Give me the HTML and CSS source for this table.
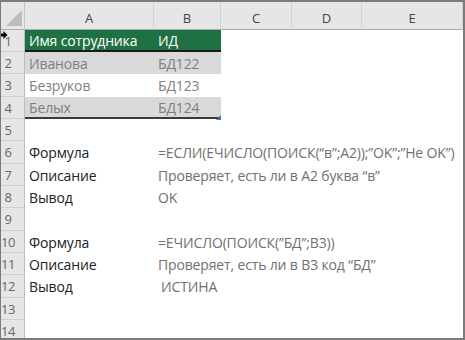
FILE: index.html
```html
<!DOCTYPE html>
<html>
<head>
<meta charset="utf-8">
<link rel="stylesheet" href="styles.css">
</head>
<body>
<div class="frame">
  <div class="sheet">
    <div class="corner"><svg width="16" height="16" viewBox="0 0 16 16"><polygon points="16,0 16,16 0,16" fill="#bdbdbd"/></svg></div>
    <div class="ch">A</div>
    <div class="ch">B</div>
    <div class="ch">C</div>
    <div class="ch">D</div>
    <div class="ch last">E</div>

    <div class="rh">1</div>
    <div class="c head">Имя сотрудника</div>
    <div class="c head">ИД</div>
    <div class="c rest"></div>

    <div class="rh">2</div>
    <div class="c band">Иванова</div>
    <div class="c band">БД122</div>
    <div class="c rest"></div>

    <div class="rh">3</div>
    <div class="c plain">Безруков</div>
    <div class="c plain">БД123</div>
    <div class="c rest"></div>

    <div class="rh">4</div>
    <div class="c band end">Белых</div>
    <div class="c band end">БД124</div>
    <div class="c rest"></div>

    <div class="rh">5</div>
    <div class="c full"></div>

    <div class="rh">6</div>
    <div class="c label">Формула</div>
    <div class="c value">=ЕСЛИ(ЕЧИСЛО(ПОИСК(“в”;A2));”OK”;”Не OK”)</div>

    <div class="rh">7</div>
    <div class="c label">Описание</div>
    <div class="c value">Проверяет, есть ли в A2 буква “в”</div>

    <div class="rh">8</div>
    <div class="c label">Вывод</div>
    <div class="c value">OK</div>

    <div class="rh">9</div>
    <div class="c full"></div>

    <div class="rh">10</div>
    <div class="c label">Формула</div>
    <div class="c value">=ЕЧИСЛО(ПОИСК(”БД”;B3))</div>

    <div class="rh">11</div>
    <div class="c label">Описание</div>
    <div class="c value">Проверяет, есть ли в B3 код “БД”</div>

    <div class="rh">12</div>
    <div class="c label">Вывод</div>
    <div class="c value indent">ИСТИНА</div>

    <div class="rh">13</div>
    <div class="c full"></div>

    <div class="rh">14</div>
    <div class="c full"></div>
  </div>
  <svg class="cursor" width="8" height="8" viewBox="0 0 8 8"><polygon points="0,2.5 3.5,2.5 3.5,0 7.5,4 3.5,8 3.5,5.5 0,5.5" fill="#000"/></svg>
  <svg class="handle" width="5" height="5" viewBox="0 0 5 5"><polygon points="5,0 5,5 0,5" fill="#3d6fc6"/></svg>
</div>
</body>
</html>
```
FILE: styles.css
```css
html, body {
  margin: 0;
  padding: 0;
  background: #fff;
}

.frame {
  position: relative;
  width: 462px;
  height: 336px;
  border-top: 2px solid #7b7b7b;
  border-left: 1px solid #7b7b7b;
  border-right: 2px solid #7b7b7b;
  border-bottom: 2px solid #7b7b7b;
  overflow: hidden;
  font-family: "Open Sans", "Noto Sans", sans-serif;
}

.sheet {
  display: grid;
  grid-template-columns: 24px 129px 67px 71px 70px 101px;
  grid-template-rows: 28px 22px 22px 23px 22px 22px 23px 22px 22px 23px 22px 22px 23px 22px 22px;
  height: 336px;
  overflow: hidden;
}

.corner {
  background: #e6e6e6;
  border-right: 1px solid #c6c6c6;
  border-bottom: 1px solid #ababab;
  display: flex;
  align-items: flex-end;
  justify-content: flex-end;
  padding: 0 2px 3px 0;
}

.ch {
  background: #e6e6e6;
  border-right: 1px solid #d2d2d2;
  border-bottom: 1px solid #ababab;
  color: #444;
  font-size: 13px;
  display: flex;
  align-items: flex-end;
  justify-content: center;
  padding-bottom: 3px;
  line-height: 16px;
}

.ch.last {
  border-right: 1px solid #d2d2d2;
}

.rh {
  background: #e6e6e6;
  border-right: 1px solid #bdbdbd;
  border-bottom: 1px solid #d0d0d0;
  color: #666;
  font-size: 13px;
  display: flex;
  align-items: center;
  padding-left: 1px;
  width: 12px;
  justify-content: center;
  box-sizing: content-box;
  padding-right: 10px;
  letter-spacing: -0.5px;
}

.c {
  display: flex;
  align-items: center;
  padding-left: 4px;
  font-size: 14px;
  letter-spacing: -0.15px;
  white-space: nowrap;
}

.head {
  background: #1f7144;
  color: #fff;
  border-bottom: 2px solid #1a1a1a;
}

.band {
  background: #d9d9d9;
  color: #7f7f7f;
}

.plain {
  color: #7f7f7f;
}

.end {
  border-bottom: 2px solid #3a3a3a;
}

.rest {
  grid-column: 4 / 7;
}

.full {
  grid-column: 2 / 7;
}

.label {
  color: #222;
}

.value {
  grid-column: 3 / 7;
  color: #707070;
}

.indent {
  padding-left: 7px;
}

.cursor {
  position: absolute;
  left: -1px;
  top: 29px;
}

.handle {
  position: absolute;
  left: 215px;
  top: 113px;
}
```
